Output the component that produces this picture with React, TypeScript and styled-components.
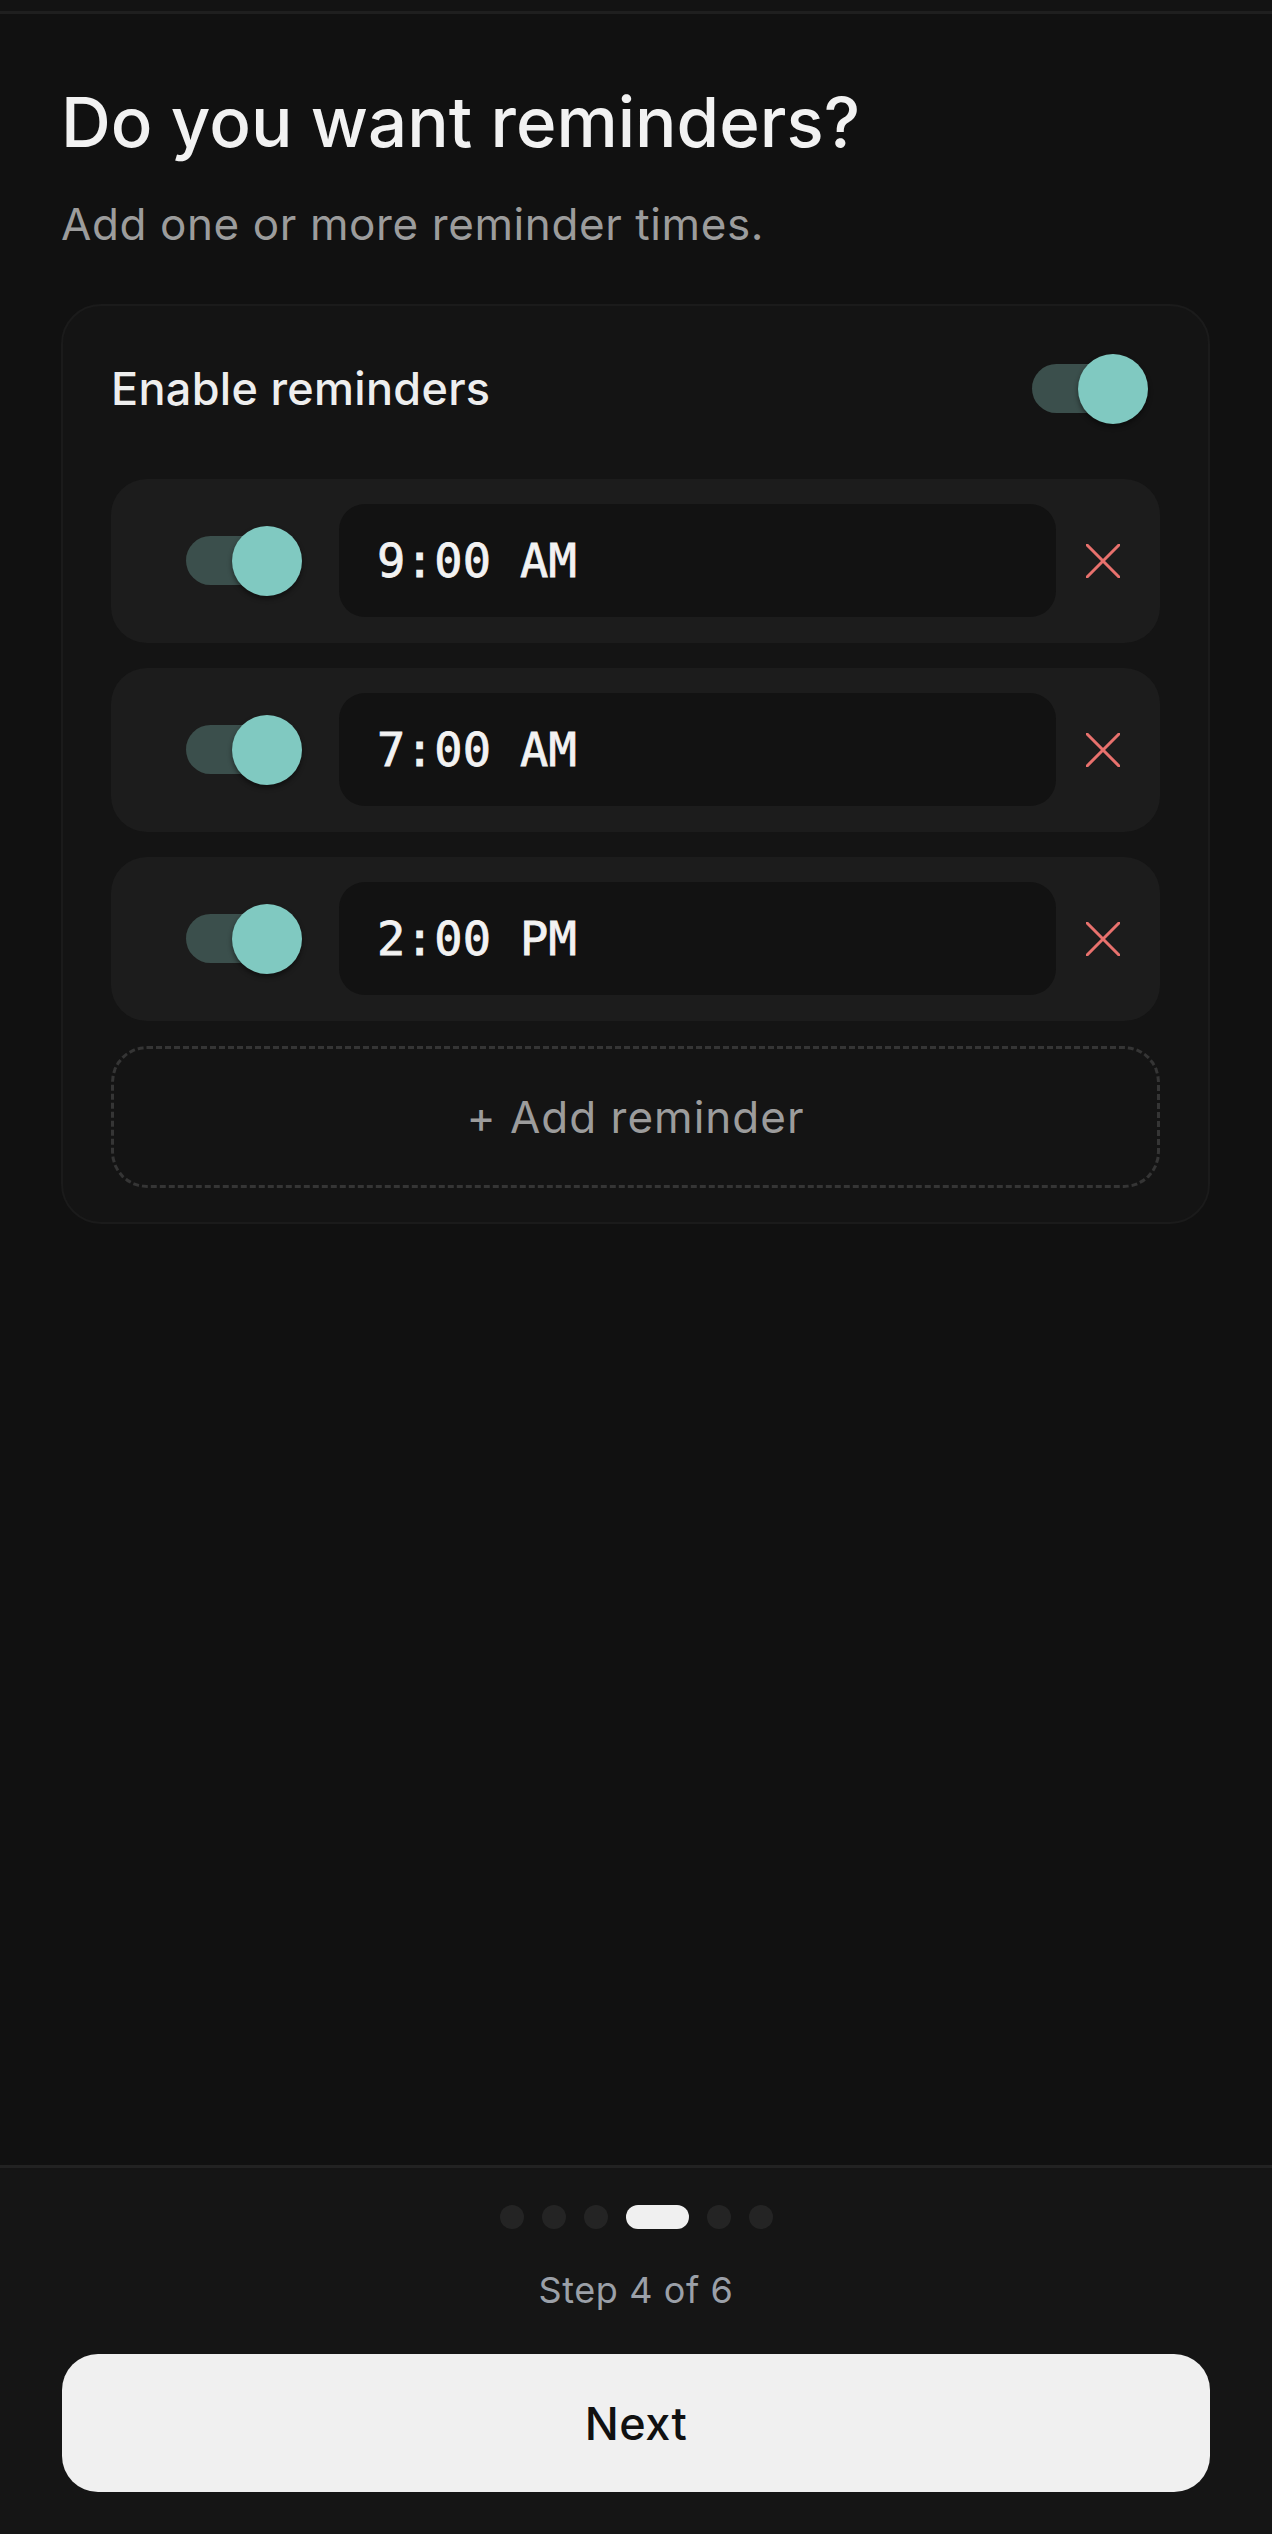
import React, { useState } from "react";
import styled, { createGlobalStyle } from "styled-components";

const GlobalStyle = createGlobalStyle`
  html, body {
    margin: 0;
    padding: 0;
    background: #111111;
  }
  body {
    font-family: Inter, "Noto Sans", sans-serif;
    color: #eeeeee;
  }
  * {
    box-sizing: border-box;
  }
`;

const Page = styled.div`
  min-height: 2534px;
  display: flex;
  flex-direction: column;
  background: #111111;
`;

const TopBar = styled.div`
  height: 14px;
  background: #131313;
  border-bottom: 3px solid #1f1f1f;
`;

const Main = styled.main`
  flex: 1;
  padding: 0 62px 0 61px;
`;

const Title = styled.h1`
  margin: 67px 0 0;
  font-size: 69px;
  line-height: 1.2;
  font-weight: 500;
  letter-spacing: 0;
  color: #f2f2f2;
`;

const Subtitle = styled.p`
  margin: 34px 0 0;
  font-size: 44px;
  line-height: 1.2;
  font-weight: 400;
  letter-spacing: 0.6px;
  color: #9c9c9c;
`;

const Card = styled.section`
  margin-top: 53px;
  background: #141414;
  border: 2px solid #1b1b1b;
  border-radius: 40px;
  padding: 48px 48px 34px;
`;

const CardHeader = styled.div`
  display: flex;
  align-items: center;
  justify-content: space-between;
  height: 70px;
  padding-right: 12px;
  margin-bottom: 55px;
`;

const HeaderLabel = styled.span`
  font-size: 45px;
  font-weight: 500;
  letter-spacing: 0.3px;
  color: #eeeeee;
`;

const List = styled.div`
  display: flex;
  flex-direction: column;
  gap: 25px;
`;

const SwitchRoot = styled.button`
  position: relative;
  width: 116px;
  height: 70px;
  padding: 0;
  border: none;
  background: transparent;
  cursor: pointer;
  flex: 0 0 auto;
`;

const SwitchTrack = styled.span<{ $on: boolean }>`
  position: absolute;
  left: 0;
  top: 10px;
  width: 106px;
  height: 49px;
  border-radius: 25px;
  background: ${(p) => (p.$on ? "#3b4f4c" : "#3a3a3a")};
`;

const SwitchThumb = styled.span<{ $on: boolean }>`
  position: absolute;
  top: 0;
  left: ${(p) => (p.$on ? "46px" : "0px")};
  width: 70px;
  height: 70px;
  border-radius: 50%;
  background: ${(p) => (p.$on ? "#80c9c1" : "#d8d8d8")};
  box-shadow: 0 3px 5px rgba(0, 0, 0, 0.45);
`;

const Row = styled.div`
  display: flex;
  align-items: center;
  height: 164px;
  padding: 0 40px 0 75px;
  background: #1c1c1c;
  border-radius: 36px;
`;

const TimeBox = styled.div`
  flex: 1;
  height: 113px;
  margin: 0 30px 0 37px;
  display: flex;
  align-items: center;
  padding-left: 38px;
  background: #121212;
  border-radius: 26px;
  font-family: "DejaVu Sans Mono", "Liberation Mono", monospace;
  font-size: 47px;
  font-weight: 400;
  letter-spacing: 0.3px;
  color: #f2f2f2;
  -webkit-text-stroke: 0.8px #f2f2f2;
`;

const RemoveButton = styled.button`
  width: 34px;
  height: 34px;
  padding: 0;
  border: none;
  background: transparent;
  display: flex;
  align-items: center;
  justify-content: center;
  cursor: pointer;
`;

const AddButton = styled.button`
  height: 142px;
  width: 100%;
  border: 3px dashed #353535;
  border-radius: 36px;
  background: transparent;
  font-family: Inter, "Noto Sans", sans-serif;
  font-size: 44px;
  font-weight: 400;
  letter-spacing: 1px;
  color: #9c9c9c;
  cursor: pointer;
`;

const Footer = styled.footer`
  background: #151515;
  border-top: 3px solid #222222;
  padding: 37px 62px 42px;
  display: flex;
  flex-direction: column;
  align-items: center;
`;

const Dots = styled.div`
  display: flex;
  gap: 18px;
  height: 24px;
`;

const Dot = styled.span<{ $active: boolean }>`
  width: ${(p) => (p.$active ? "63px" : "24px")};
  height: 24px;
  border-radius: 12px;
  background: ${(p) => (p.$active ? "#f0f0f0" : "#242424")};
`;

const StepText = styled.div`
  margin-top: 40px;
  font-size: 36px;
  line-height: 1.2;
  letter-spacing: 0.6px;
  color: #9ba0a8;
`;

const NextButton = styled.button`
  margin-top: 42px;
  width: 100%;
  height: 138px;
  border: none;
  border-radius: 36px;
  background: #f0f0f0;
  font-family: Inter, "Noto Sans", sans-serif;
  font-size: 45px;
  font-weight: 500;
  letter-spacing: 0.5px;
  color: #111111;
  cursor: pointer;
`;

const Switch: React.FC<{ on: boolean; onToggle: () => void }> = ({ on, onToggle }) => (
  <SwitchRoot onClick={onToggle} aria-pressed={on}>
    <SwitchTrack $on={on} />
    <SwitchThumb $on={on} />
  </SwitchRoot>
);

const CloseIcon = () => (
  <svg width="34" height="34" viewBox="0 0 34 34" fill="none">
    <path d="M1 1 L33 33 M33 1 L1 33" stroke="#e8716d" strokeWidth="3" strokeLinecap="round" />
  </svg>
);

type Reminder = { id: number; time: string; on: boolean };

export default function App() {
  const [enabled, setEnabled] = useState(true);
  const [reminders, setReminders] = useState<Reminder[]>([
    { id: 1, time: "9:00 AM", on: true },
    { id: 2, time: "7:00 AM", on: true },
    { id: 3, time: "2:00 PM", on: true },
  ]);

  const toggle = (id: number) =>
    setReminders((rs) => rs.map((r) => (r.id === id ? { ...r, on: !r.on } : r)));
  const remove = (id: number) => setReminders((rs) => rs.filter((r) => r.id !== id));

  return (
    <Page>
      <GlobalStyle />
      <TopBar />
      <Main>
        <Title>Do you want reminders?</Title>
        <Subtitle>Add one or more reminder times.</Subtitle>
        <Card>
          <CardHeader>
            <HeaderLabel>Enable reminders</HeaderLabel>
            <Switch on={enabled} onToggle={() => setEnabled(!enabled)} />
          </CardHeader>
          <List>
            {reminders.map((r) => (
              <Row key={r.id}>
                <Switch on={r.on} onToggle={() => toggle(r.id)} />
                <TimeBox>{r.time}</TimeBox>
                <RemoveButton onClick={() => remove(r.id)} aria-label="Remove">
                  <CloseIcon />
                </RemoveButton>
              </Row>
            ))}
            <AddButton>+ Add reminder</AddButton>
          </List>
        </Card>
      </Main>
      <Footer>
        <Dots>
          {[0, 1, 2, 3, 4, 5].map((i) => (
            <Dot key={i} $active={i === 3} />
          ))}
        </Dots>
        <StepText>Step 4 of 6</StepText>
        <NextButton>Next</NextButton>
      </Footer>
    </Page>
  );
}
